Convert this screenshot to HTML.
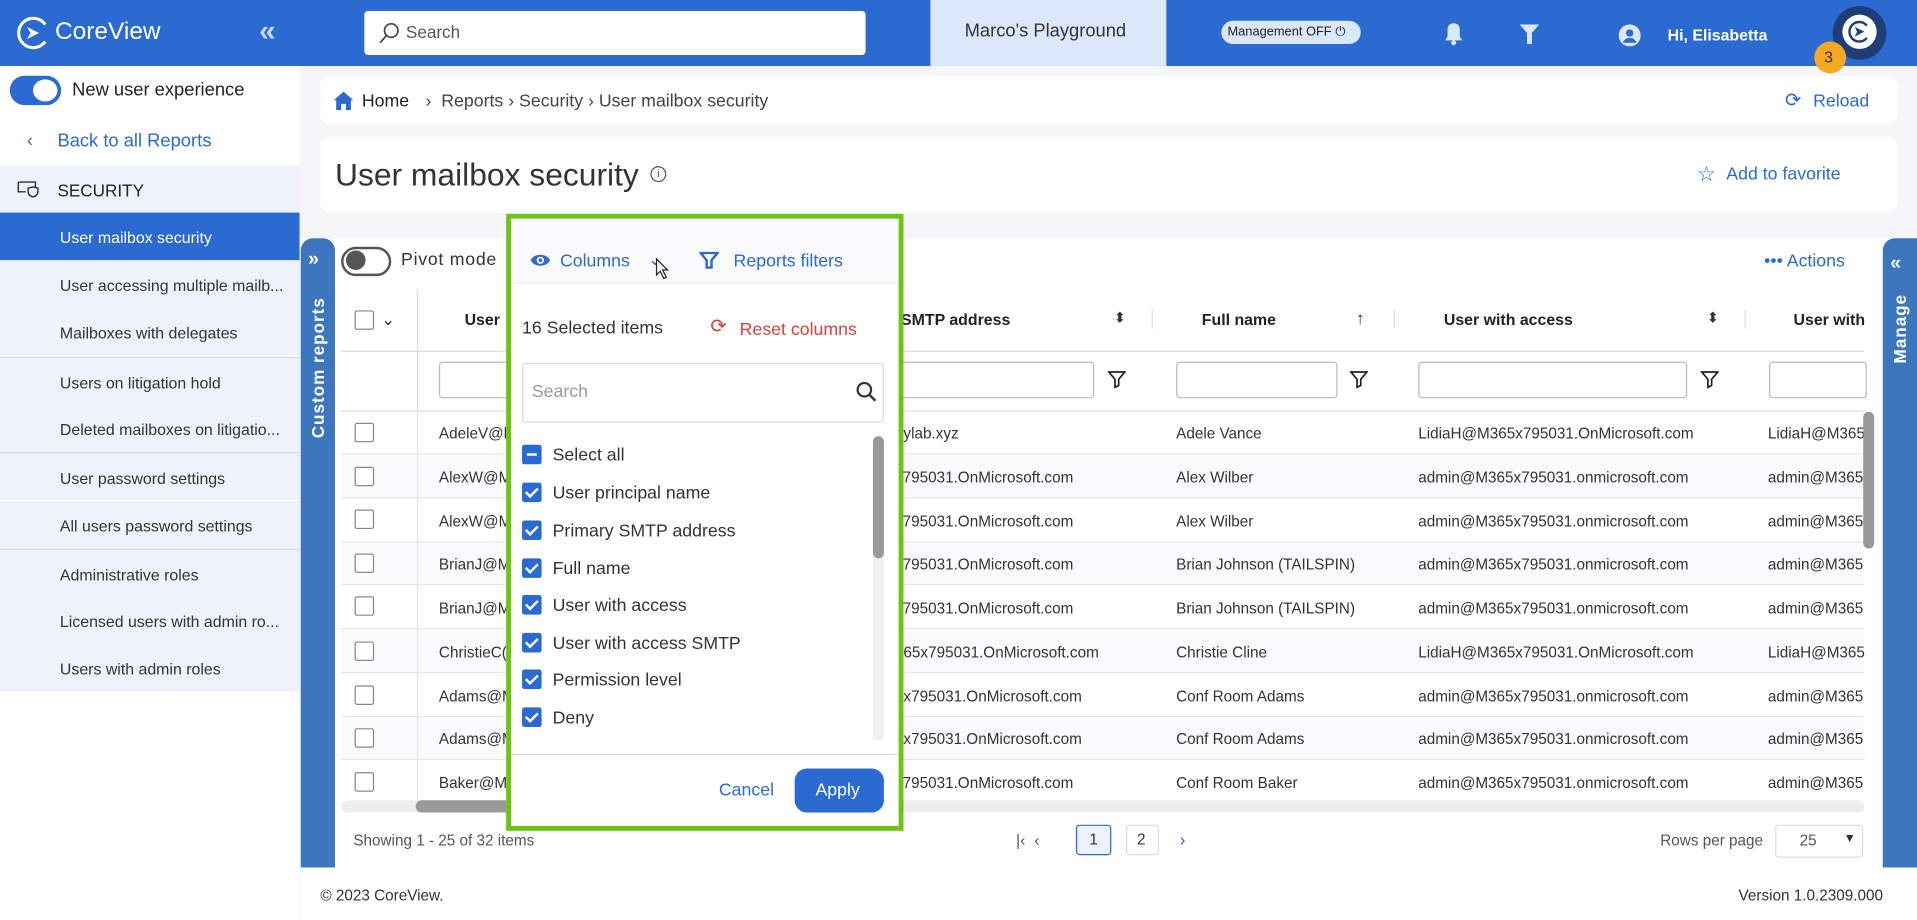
<!DOCTYPE html>
<html><head><meta charset="utf-8"><style>
*{box-sizing:border-box;margin:0;padding:0}
html,body{width:1917px;height:920px;overflow:hidden;background:#fff;font-family:"Liberation Sans",sans-serif}
#w{position:absolute;left:0;top:0;width:1568px;height:753px;transform:scale(1.22258,1.2218);transform-origin:0 0;background:#f6f6f9;color:#333}
.a{position:absolute}
.t{position:absolute;white-space:nowrap;line-height:1}
.blue{color:#2b6ad1}
.cb{position:absolute;width:16px;height:16px;border:1.5px solid #888;border-radius:2px;background:#fff}
.ck{position:absolute;width:16px;height:16px;border-radius:2px;background:#2b6ad1}
.ck:after{content:"";position:absolute;left:5px;top:2px;width:4px;height:8px;border:solid #fff;border-width:0 2px 2px 0;transform:rotate(45deg)}
.side{position:absolute;left:0;width:245px;height:39px;background:#eef2fc;font-size:13px;color:#333}
.side span{position:absolute;left:49px;top:13px}
.row{position:absolute;left:279px;width:1246px;height:35px;border-bottom:1px solid #e6e7ec;font-size:12.5px;color:#333}
.row span{position:absolute;top:11px}
.hd{font-weight:bold;font-size:13px;color:#222}
.inp{position:absolute;height:30px;border:1px solid #bbb;border-radius:3px;background:#fff;top:296px}
.li{position:absolute;left:427px;font-size:14.5px;color:#333}
</style></head><body><div id="w">
<!-- top bar -->
<div class="a" style="left:0;top:0;width:1568px;height:54px;background:#2b6ad1"></div>
<svg class="a" style="left:13px;top:12px" width="30" height="30" viewBox="0 0 30 30"><path d="M24 8A12 12 0 1 0 24 22" fill="none" stroke="#fff" stroke-width="2.5"/><path d="M9 10l10 5-10 5 3-5z" fill="#fff"/></svg>
<div class="t" style="left:45px;top:16px;font-size:20px;color:#fff">CoreView</div>
<div class="t" style="left:212px;top:14px;font-size:24px;color:#c9d8f5;font-weight:bold">«</div>
<div class="a" style="left:298px;top:9px;width:410px;height:36px;background:#fff;border-radius:3px"></div>
<svg class="a" style="left:308px;top:17px" width="20" height="20" viewBox="0 0 20 20"><circle cx="12" cy="8" r="5.5" fill="none" stroke="#444" stroke-width="1.4"/><path d="M8 12l-5 6" stroke="#444" stroke-width="1.4"/></svg>
<div class="t" style="left:332px;top:19px;font-size:14px;color:#555">Search</div>
<div class="a" style="left:761px;top:0;width:193px;height:54px;background:#dbe7fb"></div>
<div class="t" style="left:789px;top:18px;font-size:15px;color:#333">Marco's Playground</div>
<div class="a" style="left:999px;top:17px;width:114px;height:19px;background:#dbe7fb;border-radius:10px"></div>
<div class="t" style="left:1004px;top:21px;font-size:10.5px;color:#222">Management OFF ⏻</div>
<svg class="a" style="left:1181px;top:18px" width="16" height="20" viewBox="0 0 16 20"><path d="M8 1c3 0 5 2 5 5v6l2 3H1l2-3V6c0-3 2-5 5-5z" fill="#dbe7fb"/><circle cx="8" cy="17" r="2" fill="#dbe7fb"/></svg>
<svg class="a" style="left:1243px;top:20px" width="16" height="16" viewBox="0 0 16 16"><path d="M0 0h16l-6 7v9H6V7z" fill="#dbe7fb"/></svg>
<svg class="a" style="left:1324px;top:20px" width="18" height="18" viewBox="0 0 18 18"><circle cx="9" cy="9" r="9" fill="#dbe7fb"/><circle cx="9" cy="7" r="3" fill="#2b6ad1"/><path d="M3.5 15c1-3 3-4 5.5-4s4.5 1 5.5 4" fill="#2b6ad1"/></svg>
<div class="t" style="left:1364px;top:22px;font-size:13px;color:#fff;font-weight:bold">Hi, Elisabetta</div>
<div class="a" style="left:1499px;top:5px;width:44px;height:44px;border-radius:50%;background:#1f3e78"></div>
<div class="a" style="left:1507px;top:12px;width:28px;height:28px;border-radius:50%;background:#fff"></div>
<svg class="a" style="left:1511px;top:16px" width="20" height="20" viewBox="0 0 20 20"><path d="M16 5A8 8 0 1 0 16 15" fill="none" stroke="#1f3e78" stroke-width="2"/><path d="M6 6l8 4-8 4 2-4z" fill="#1f3e78"/></svg>
<div class="a" style="left:1484px;top:34px;width:26px;height:26px;border-radius:50%;background:#f7a823"></div>
<div class="t" style="left:1492px;top:40px;font-size:13px;color:#333">3</div>
<!-- sidebar -->
<div class="a" style="left:0;top:54px;width:245px;height:699px;background:#fff"></div>
<div class="a" style="left:8px;top:62px;width:42px;height:24px;border-radius:12px;background:#2b6ad1"></div>
<div class="a" style="left:27px;top:65px;width:20px;height:18px;border-radius:50%;background:#fff"></div>
<div class="t" style="left:59px;top:66px;font-size:15px;color:#222">New user experience</div>
<div class="t blue" style="left:22px;top:108px;font-size:15px">‹</div>
<div class="t blue" style="left:47px;top:108px;font-size:15px">Back to all Reports</div>
<div class="side" style="top:136px;height:38px"><span style="left:47px;top:12px;font-size:14px;color:#222">SECURITY</span></div>
<svg class="a" style="left:14px;top:148px" width="18" height="14" viewBox="0 0 18 14"><path d="M1 1h14v5M1 1v8h6" fill="none" stroke="#333" stroke-width="1.2"/><path d="M9 6l4-1 4 1v3c0 2-2 4-4 4s-4-2-4-4z" fill="none" stroke="#333" stroke-width="1.2"/></svg>
<div class="side" style="top:174px;background:#2b6ad1;color:#fff"><span>User mailbox security</span></div>
<div class="side" style="top:213px"><span>User accessing multiple mailb...</span></div>
<div class="side" style="top:252px"><span>Mailboxes with delegates</span></div>
<div class="side" style="top:292px;border-top:1px solid #d5d9e3"><span>Users on litigation hold</span></div>
<div class="side" style="top:331px"><span>Deleted mailboxes on litigatio...</span></div>
<div class="side" style="top:370px;border-top:1px solid #d5d9e3"><span>User password settings</span></div>
<div class="side" style="top:410px"><span>All users password settings</span></div>
<div class="side" style="top:449px;border-top:1px solid #d5d9e3"><span>Administrative roles</span></div>
<div class="side" style="top:488px"><span>Licensed users with admin ro...</span></div>
<div class="side" style="top:527px"><span>Users with admin roles</span></div>
<!-- main cards -->
<div class="a" style="left:262px;top:62px;width:1290px;height:40px;background:#fff;border-radius:8px"></div>
<svg class="a" style="left:273px;top:75px" width="16" height="15" viewBox="0 0 16 15"><path d="M8 0l8 7h-2v8h-4v-5H6v5H2V7H0z" fill="#2b6ad1"/></svg>
<div class="t" style="left:296px;top:76px;font-size:14.5px;color:#222">Home</div>
<div class="t" style="left:348px;top:76px;font-size:14.5px;color:#444">›&nbsp; Reports › Security › User mailbox security</div>
<div class="t blue" style="left:1460px;top:75px;font-size:16px">⟳</div>
<div class="t blue" style="left:1483px;top:76px;font-size:14.5px">Reload</div>
<div class="a" style="left:262px;top:112px;width:1290px;height:62px;background:#fff;border-radius:8px"></div>
<div class="t" style="left:274px;top:130px;font-size:26px;color:#333">User mailbox security</div>
<div class="a" style="left:532px;top:136px;width:13px;height:13px;border:1.2px solid #555;border-radius:50%;font-size:9px;line-height:11px;text-align:center;color:#555">i</div>
<div class="t blue" style="left:1388px;top:134px;font-size:17px">☆</div>
<div class="t blue" style="left:1412px;top:136px;font-size:14.5px">Add to favorite</div>
<!-- grid -->
<div class="a" style="left:246px;top:195px;width:1322px;height:515px;background:#fff"></div>
<div class="a" style="left:246px;top:195px;width:28px;height:515px;background:#3c77bd;border-radius:10px 10px 0 0"></div>
<div class="t" style="left:252px;top:205px;font-size:16px;color:#fff;font-weight:bold">»</div>
<div class="t" style="left:260px;top:301px;font-size:14px;color:#fff;font-weight:bold;letter-spacing:.8px;transform:translate(-50%,-50%) rotate(-90deg)">Custom reports</div>
<div class="a" style="left:1540px;top:195px;width:28px;height:515px;background:#3c77bd;border-radius:10px 0 0 0"></div>
<div class="t" style="left:1546px;top:208px;font-size:16px;color:#fff;font-weight:bold">«</div>
<div class="t" style="left:1554px;top:269px;font-size:14px;color:#fff;font-weight:bold;letter-spacing:.8px;transform:translate(-50%,-50%) rotate(-90deg)">Manage</div>
<div class="a" style="left:279px;top:202px;width:41px;height:24px;border:2px solid #555;border-radius:12px;background:#fff"></div>
<div class="a" style="left:283px;top:205px;width:16px;height:16px;border-radius:50%;background:#555"></div>
<div class="t" style="left:328px;top:206px;font-size:14.5px;color:#333;letter-spacing:.6px">Pivot mode</div>
<div class="t blue" style="left:1443px;top:207px;font-size:14.5px">••• Actions</div>
<!-- header -->
<div class="a" style="left:279px;top:237px;width:1246px;height:100px;border-bottom:1px solid #ddd"></div>
<div class="a" style="left:279px;top:287px;width:1246px;height:1px;background:#ddd"></div>
<div class="a" style="left:341px;top:237px;width:1px;height:100px;background:#ddd"></div>
<div class="cb" style="left:290px;top:254px"></div>
<div class="t" style="left:312px;top:255px;font-size:13px;color:#222">⌄</div>
<div class="t hd" style="left:380px;top:255px">User</div>
<div class="t hd" style="left:737px;top:255px">SMTP address</div>
<div class="t" style="left:911px;top:254px;font-size:12px">⬍</div>
<div class="a" style="left:942px;top:253px;width:1px;height:16px;background:#ddd"></div>
<div class="t hd" style="left:983px;top:255px">Full name</div>
<div class="t" style="left:1109px;top:253px;font-size:14px">↑</div>
<div class="a" style="left:1140px;top:253px;width:1px;height:16px;background:#ddd"></div>
<div class="t hd" style="left:1181px;top:255px">User with access</div>
<div class="t" style="left:1396px;top:254px;font-size:12px">⬍</div>
<div class="a" style="left:1427px;top:253px;width:1px;height:16px;background:#ddd"></div>
<div class="t hd" style="left:1467px;top:255px">User with</div>
<div class="inp" style="left:359px;width:60px"></div>
<div class="inp" style="left:737px;width:158px"></div>
<div class="inp" style="left:962px;width:132px"></div>
<div class="inp" style="left:1160px;width:220px"></div>
<div class="inp" style="left:1447px;width:80px"></div>
<svg class="a" style="left:906px;top:303px" width="15" height="15" viewBox="0 0 15 15"><path d="M1 1.5h13l-5 6v5l-3 1.5v-6.5z" fill="none" stroke="#222" stroke-width="1.4"/></svg>
<svg class="a" style="left:1104px;top:303px" width="15" height="15" viewBox="0 0 15 15"><path d="M1 1.5h13l-5 6v5l-3 1.5v-6.5z" fill="none" stroke="#222" stroke-width="1.4"/></svg>
<svg class="a" style="left:1391px;top:303px" width="15" height="15" viewBox="0 0 15 15"><path d="M1 1.5h13l-5 6v5l-3 1.5v-6.5z" fill="none" stroke="#222" stroke-width="1.4"/></svg>
<!-- rows -->
<div class="row" style="top:337px"><span style="left:80px">AdeleV@b</span><span style="left:453px">aylab.xyz</span><span style="left:683px">Adele Vance</span><span style="left:881px">LidiaH@M365x795031.OnMicrosoft.com</span><span style="left:1167px">LidiaH@M365</span></div>
<div class="row" style="top:373px;background:#fbfbfd"><span style="left:80px">AlexW@M</span><span style="left:453px">x795031.OnMicrosoft.com</span><span style="left:683px">Alex Wilber</span><span style="left:881px">admin@M365x795031.onmicrosoft.com</span><span style="left:1167px">admin@M365</span></div>
<div class="row" style="top:409px"><span style="left:80px">AlexW@M</span><span style="left:453px">x795031.OnMicrosoft.com</span><span style="left:683px">Alex Wilber</span><span style="left:881px">admin@M365x795031.onmicrosoft.com</span><span style="left:1167px">admin@M365</span></div>
<div class="row" style="top:444px;background:#fbfbfd"><span style="left:80px">BrianJ@M</span><span style="left:453px">x795031.OnMicrosoft.com</span><span style="left:683px">Brian Johnson (TAILSPIN)</span><span style="left:881px">admin@M365x795031.onmicrosoft.com</span><span style="left:1167px">admin@M365</span></div>
<div class="row" style="top:480px"><span style="left:80px">BrianJ@M</span><span style="left:453px">x795031.OnMicrosoft.com</span><span style="left:683px">Brian Johnson (TAILSPIN)</span><span style="left:881px">admin@M365x795031.onmicrosoft.com</span><span style="left:1167px">admin@M365</span></div>
<div class="row" style="top:516px;background:#fbfbfd"><span style="left:80px">ChristieC(</span><span style="left:453px">365x795031.OnMicrosoft.com</span><span style="left:683px">Christie Cline</span><span style="left:881px">LidiaH@M365x795031.OnMicrosoft.com</span><span style="left:1167px">LidiaH@M365</span></div>
<div class="row" style="top:552px"><span style="left:80px">Adams@M</span><span style="left:453px">5x795031.OnMicrosoft.com</span><span style="left:683px">Conf Room Adams</span><span style="left:881px">admin@M365x795031.onmicrosoft.com</span><span style="left:1167px">admin@M365</span></div>
<div class="row" style="top:587px;background:#fbfbfd"><span style="left:80px">Adams@M</span><span style="left:453px">5x795031.OnMicrosoft.com</span><span style="left:683px">Conf Room Adams</span><span style="left:881px">admin@M365x795031.onmicrosoft.com</span><span style="left:1167px">admin@M365</span></div>
<div class="row" style="top:623px;border:0"><span style="left:80px">Baker@M</span><span style="left:453px">x795031.OnMicrosoft.com</span><span style="left:683px">Conf Room Baker</span><span style="left:881px">admin@M365x795031.onmicrosoft.com</span><span style="left:1167px">admin@M365</span></div>
<div class="a" style="left:341px;top:337px;width:1px;height:320px;background:#e3e3e8"></div>
<div class="cb" style="left:290px;top:346px"></div><div class="cb" style="left:290px;top:382px"></div><div class="cb" style="left:290px;top:417px"></div><div class="cb" style="left:290px;top:453px"></div><div class="cb" style="left:290px;top:488px"></div><div class="cb" style="left:290px;top:525px"></div><div class="cb" style="left:290px;top:561px"></div><div class="cb" style="left:290px;top:596px"></div><div class="cb" style="left:290px;top:632px"></div>
<div class="a" style="left:279px;top:655px;width:1246px;height:10px;background:#eeeef1;border-radius:5px"></div>
<div class="a" style="left:340px;top:655px;width:80px;height:10px;background:#999;border-radius:5px"></div>
<div class="a" style="left:1524px;top:337px;width:9px;height:112px;background:#999;border-radius:5px"></div>
<!-- footer -->
<div class="t" style="left:289px;top:682px;font-size:12.5px;color:#555">Showing 1 - 25 of 32 items</div>
<div class="t" style="left:831px;top:681px;font-size:13px;color:#555">|‹ &nbsp;‹</div>
<div class="a" style="left:880px;top:675px;width:29px;height:25px;border:1px solid #2b6ad1;border-radius:3px;background:#eef2fc"></div>
<div class="t" style="left:891px;top:681px;font-size:12.5px;color:#333">1</div>
<div class="a" style="left:921px;top:675px;width:27px;height:25px;border:1px solid #ddd;border-radius:3px"></div>
<div class="t" style="left:930px;top:681px;font-size:12.5px;color:#333">2</div>
<div class="t blue" style="left:965px;top:680px;font-size:14px">›</div>
<div class="t" style="left:1358px;top:682px;font-size:12.5px;color:#555">Rows per page</div>
<div class="a" style="left:1452px;top:675px;width:72px;height:27px;border:1px solid #ddd;border-radius:3px;background:#fff"></div>
<div class="t" style="left:1472px;top:682px;font-size:12.5px;color:#555">25</div>
<div class="t" style="left:1508px;top:682px;font-size:10px;color:#333">▼</div>
<div class="a" style="left:246px;top:710px;width:1322px;height:43px;background:#fff"></div>
<div class="t" style="left:262px;top:727px;font-size:12.5px;color:#333">© 2023 CoreView.</div>
<div class="t" style="left:1422px;top:727px;font-size:12.5px;color:#333">Version 1.0.2309.000</div>
<!-- dropdown -->
<div class="a" style="left:414px;top:175px;width:325px;height:505px;border:4px solid #6cc417;background:#fff"></div>
<div class="a" style="left:418px;top:179px;width:317px;height:53px;background:#fafafc;border-bottom:1px solid #eee"></div>
<svg class="a" style="left:433px;top:206px" width="18" height="14" viewBox="0 0 18 14"><path d="M1 7C4 1 14 1 17 7 14 13 4 13 1 7z" fill="#2b6ad1"/><circle cx="9" cy="7" r="3" fill="#fff"/><circle cx="9" cy="7" r="1.5" fill="#2b6ad1"/></svg>
<div class="t blue" style="left:458px;top:207px;font-size:14.5px">Columns</div>
<div class="t" style="left:530px;top:205px;font-size:14px;color:#2b6ad1">⌄</div>
<svg class="a" style="left:572px;top:206px" width="16" height="16" viewBox="0 0 16 16"><path d="M1 1h14l-5 6v6H6V7z" fill="none" stroke="#2b6ad1" stroke-width="2"/></svg>
<div class="t blue" style="left:600px;top:207px;font-size:14.5px">Reports filters</div>
<div class="t" style="left:427px;top:262px;font-size:14.5px;color:#333">16 Selected items</div>
<div class="t" style="left:581px;top:260px;font-size:16px;color:#d64040">⟳</div>
<div class="t" style="left:605px;top:263px;font-size:14.5px;color:#d64040">Reset columns</div>
<div class="a" style="left:427px;top:297px;width:296px;height:49px;border:1px solid #ddd;border-radius:3px"></div>
<div class="t" style="left:435px;top:314px;font-size:14.5px;color:#999">Search</div>
<svg class="a" style="left:700px;top:312px" width="18" height="18" viewBox="0 0 18 18"><circle cx="7" cy="7" r="5.5" fill="none" stroke="#333" stroke-width="1.8"/><path d="M11 11l5 5" stroke="#333" stroke-width="2"/></svg>
<div class="a" style="left:427px;top:364px;width:16px;height:16px;border-radius:2px;background:#2b6ad1"></div>
<div class="a" style="left:431px;top:371px;width:8px;height:2px;background:#fff"></div>
<div class="li" style="left:452px;top:365px">Select all</div>
<div class="ck" style="left:427px;top:395px"></div><div class="li" style="left:452px;top:396px">User principal name</div>
<div class="ck" style="left:427px;top:426px"></div><div class="li" style="left:452px;top:427px">Primary SMTP address</div>
<div class="ck" style="left:427px;top:457px"></div><div class="li" style="left:452px;top:458px">Full name</div>
<div class="ck" style="left:427px;top:487px"></div><div class="li" style="left:452px;top:488px">User with access</div>
<div class="ck" style="left:427px;top:518px"></div><div class="li" style="left:452px;top:519px">User with access SMTP</div>
<div class="ck" style="left:427px;top:548px"></div><div class="li" style="left:452px;top:549px">Permission level</div>
<div class="ck" style="left:427px;top:579px"></div><div class="li" style="left:452px;top:580px">Deny</div>
<div class="a" style="left:714px;top:357px;width:9px;height:249px;background:#f0f0f2;border-radius:5px"></div>
<div class="a" style="left:714px;top:357px;width:9px;height:100px;background:#999;border-radius:5px"></div>
<div class="a" style="left:418px;top:617px;width:317px;height:1px;background:#ddd"></div>
<div class="t blue" style="left:588px;top:640px;font-size:14.5px">Cancel</div>
<div class="a" style="left:650px;top:629px;width:73px;height:36px;background:#2b6ad1;border-radius:10px"></div>
<div class="t" style="left:667px;top:640px;font-size:14.5px;color:#fff">Apply</div>
<svg class="a" style="left:536px;top:211px" width="12" height="18" viewBox="0 0 12 18"><path d="M1 1v13l3-3 3 6 2-1-3-6h4z" fill="#fff" stroke="#222" stroke-width="1"/></svg>
</div></body></html>
